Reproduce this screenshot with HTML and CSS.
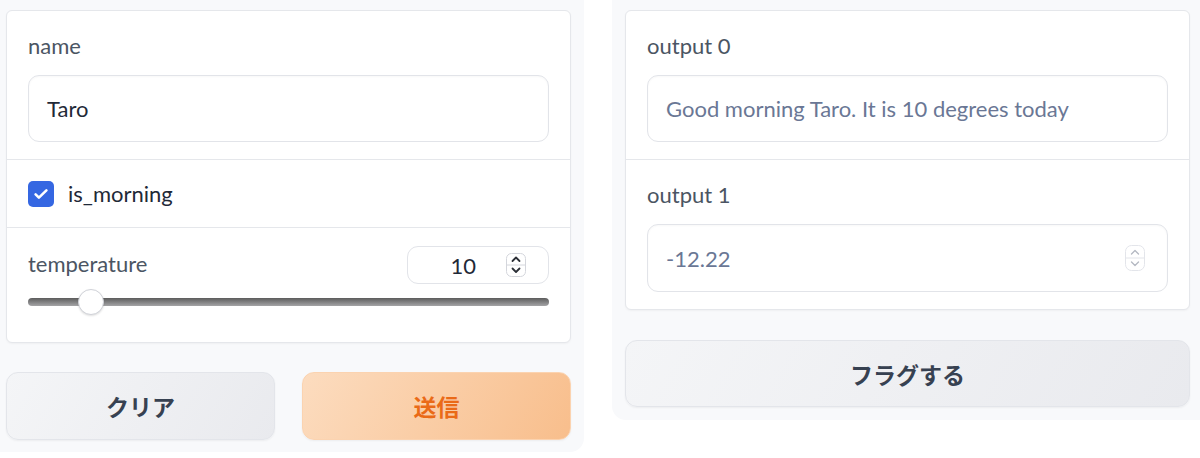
FILE: index.html
```html
<!DOCTYPE html>
<html lang="ja">
	<head>
		<meta charset="utf-8" />
		<title>greet</title>
		<link rel="stylesheet" href="styles.css">
	</head>

	<body>
		<div class="app">
			<div class="panel panel-in">
				<div class="card">
					<div class="block">
						<div class="label">name</div>
						<div class="textbox">Taro</div>
					</div>
					<div class="block block-check">
						<span class="check">
							<svg width="18" height="18" viewBox="0 0 18 18"><path d="M3.6 9.4l3.3 3.2L14.4 5.4" fill="none" stroke="#fff" stroke-width="2.6" stroke-linecap="round" stroke-linejoin="round"/></svg>
						</span>
						<span class="check-text">is_morning</span>
					</div>
					<div class="block block-slider">
						<div class="slider-head">
							<div class="label">temperature</div>
							<div class="numbox">
								<span class="num">10</span>
								<svg class="spin" width="20" height="24" viewBox="0 0 20 24"><rect x="0.5" y="0.5" width="19" height="23" rx="5" fill="#fff" stroke="#d4d6dc"/><line x1="1" y1="12" x2="19" y2="12" stroke="#d4d6dc"/><path d="M6.5 8l3.5-3.5L13.5 8M6.5 15.5l3.5 3.5 3.5-3.5" fill="none" stroke="#2b2f36" stroke-width="1.8" stroke-linecap="round" stroke-linejoin="round"/></svg>
							</div>
						</div>
						<div class="range">
							<div class="track"></div>
							<div class="thumb" style="left: 50px"></div>
						</div>
					</div>
				</div>
				<div class="actions">
					<button class="btn">クリア</button>
					<button class="btn btn-primary">送信</button>
				</div>
			</div>

			<div class="panel panel-out">
				<div class="card">
					<div class="block">
						<div class="label">output 0</div>
						<div class="textbox out">Good morning Taro. It is 10 degrees today</div>
					</div>
					<div class="block block-last">
						<div class="label">output 1</div>
						<div class="textbox out numout">
							<span>-12.22</span>
							<svg class="spin" width="20" height="26" viewBox="0 0 20 26"><rect x="0.5" y="0.5" width="19" height="25" rx="6" fill="#fff" stroke="#e3e5ea"/><line x1="1" y1="13" x2="19" y2="13" stroke="#e3e5ea"/><path d="M6.5 9l3.5-3.5L13.5 9M6.5 17l3.5 3.5 3.5-3.5" fill="none" stroke="#b4b8c2" stroke-width="1.3" stroke-linecap="round" stroke-linejoin="round"/></svg>
						</div>
					</div>
				</div>
				<div class="actions">
					<button class="btn btn-wide">フラグする</button>
				</div>
			</div>
		</div>
	</body>
</html>
```

FILE: styles.css
```css
html,
body {
	margin: 0;
	padding: 0;
	background: #fff;
	font-family: "Lato", "Noto Sans CJK JP", sans-serif;
}
.app {
	display: flex;
	align-items: flex-start;
	gap: 28px;
}
.panel {
	background: #f8f9fb;
	padding: 10px 13px 12px 6px;
	box-sizing: border-box;
}
.panel-in {
	width: 584px;
	border-radius: 0 0 14px 0;
}
.panel-out {
	flex: 1;
	padding: 10px 10px 13px 13px;
	border-radius: 0 0 0 14px;
}
.card {
	background: #fff;
	border: 1px solid #e5e7eb;
	border-radius: 6px;
	box-shadow: 0 1px 2px rgba(0, 0, 0, 0.04);
}
.block {
	padding: 20px 21px 17px;
	border-bottom: 1px solid #e5e7eb;
}
.block:last-child,
.block-last {
	border-bottom: 0;
}
.label {
	font-size: 22px;
	line-height: 30px;
	color: #4b5563;
	margin-bottom: 14px;
}
.textbox {
	height: 67px;
	box-sizing: border-box;
	border: 1px solid #e2e4e9;
	border-radius: 11px;
	padding: 0 18px;
	display: flex;
	align-items: center;
	font-size: 22px;
	color: #1f2937;
	box-shadow: inset 0 1px 2px rgba(0, 0, 0, 0.03);
}
.textbox.out {
	color: #6a7795;
}
.numout {
	justify-content: space-between;
	height: 68px;
	padding-right: 22px;
}
.block-check {
	display: flex;
	align-items: center;
	padding: 20px 21px 20px;
	height: 27px;
}
.check {
	width: 26px;
	height: 26px;
	border-radius: 5px;
	background: #3567e2;
	display: flex;
	align-items: center;
	justify-content: center;
}
.check-text {
	margin-left: 14px;
	font-size: 22px;
	color: #1f2937;
}
.block-slider {
	padding: 18px 21px 22px;
}
.slider-head {
	display: flex;
	justify-content: space-between;
	align-items: center;
}
.slider-head .label {
	margin-bottom: 0;
	margin-top: -3px;
}
.numbox {
	width: 142px;
	height: 38px;
	box-sizing: border-box;
	border: 1px solid #e2e4e9;
	border-radius: 11px;
	display: flex;
	align-items: center;
	justify-content: flex-end;
	padding-right: 22px;
	font-size: 22px;
	color: #1f2937;
}
.num {
	margin-right: 30px;
}
.range {
	position: relative;
	height: 36px;
}
.track {
	position: absolute;
	left: 0;
	right: 0;
	top: 14px;
	height: 8px;
	border-radius: 4px;
	background: linear-gradient(#5c5c5c, #a4a4a6);
}
.thumb {
	position: absolute;
	top: 5px;
	width: 26px;
	height: 26px;
	box-sizing: border-box;
	border-radius: 50%;
	background: #fff;
	border: 1px solid #d0d2d8;
	box-shadow: 0 1px 2px rgba(0, 0, 0, 0.12);
}
.actions {
	display: flex;
	gap: 27px;
	margin-top: 29px;
}
.panel-out .actions {
	margin-top: 30px;
}
.btn {
	flex: 1;
	height: 68px;
	border: 1px solid #e3e5ea;
	border-radius: 12px;
	background: linear-gradient(120deg, #f4f5f7, #e9eaee);
	font-family: "Noto Sans CJK JP", sans-serif;
	font-size: 23px;
	font-weight: 700;
	color: #374151;
	box-shadow: 0 1px 2px rgba(0, 0, 0, 0.05);
}
.btn-primary {
	background: linear-gradient(120deg, #fcdcbf, #f8be8c);
	border-color: #fbd3b0;
	color: #ea6a17;
}
.btn-wide {
	height: 67px;
}
```
